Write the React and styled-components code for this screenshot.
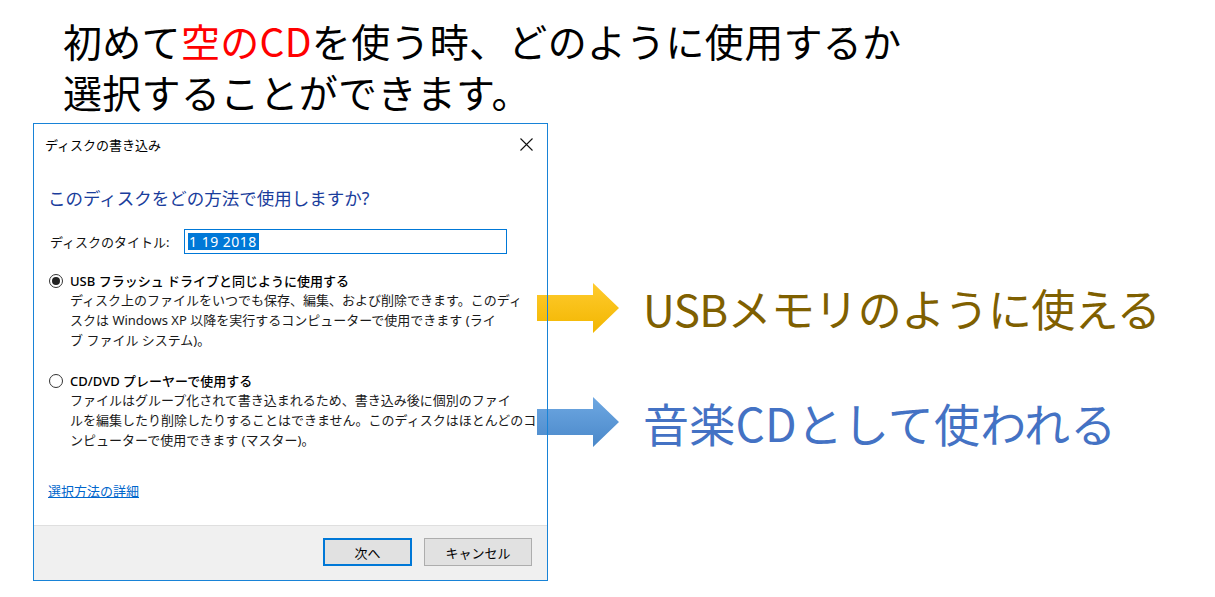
import React from 'react';
import styled, { createGlobalStyle } from 'styled-components';

const App = () => (
  <React.Fragment>
    <GlobalStyle />
    <Page>
      <Lead>
        初めて<Red>空のCD</Red>を使う時、どのように使用するか
        <br />
        選択することができます。
      </Lead>

      <Row>
        <Dialog>
          <TitleBar>
            <span>ディスクの書き込み</span>
            <CloseIcon viewBox="0 0 13 13">
              <path d="M0.5 0.5 L12.5 12.5 M12.5 0.5 L0.5 12.5" />
            </CloseIcon>
          </TitleBar>

          <Body>
            <Instruction>このディスクをどの方法で使用しますか?</Instruction>

            <Field>
              <FieldLabel>ディスクのタイトル:</FieldLabel>
              <TitleInput>
                <Selected>1 19 2018</Selected>
              </TitleInput>
            </Field>

            <Option top={18}>
              <Radio checked />
              <OptionText>
                <OptionLabel>USB フラッシュ ドライブと同じように使用する</OptionLabel>
                <OptionDesc>
                  ディスク上のファイルをいつでも保存、編集、および削除できます。このディ
                  <br />
                  スクは Windows XP 以降を実行するコンピューターで使用できます (ライ
                  <br />
                  ブ ファイル システム)。
                </OptionDesc>
              </OptionText>
            </Option>

            <Option top={22}>
              <Radio />
              <OptionText>
                <OptionLabel>CD/DVD プレーヤーで使用する</OptionLabel>
                <OptionDesc>
                  ファイルはグループ化されて書き込まれるため、書き込み後に個別のファイ
                  <br />
                  ルを編集したり削除したりすることはできません。このディスクはほとんどのコ
                  <br />
                  ンピューターで使用できます (マスター)。
                </OptionDesc>
              </OptionText>
            </Option>

            <HelpLink>選択方法の詳細</HelpLink>
          </Body>

          <Footer>
            <Button primary width={89}>次へ</Button>
            <Button width={108}>キャンセル</Button>
          </Footer>
        </Dialog>

        <Callouts>
          <Callout>
            <Arrow from="#ffcb2e" to="#f2b600" id="gold" />
            <CalloutText color="#7f6000" size={44} spacing={-0.6}>
              USBメモリのように使える
            </CalloutText>
          </Callout>
          <Callout>
            <Arrow from="#6ea8e2" to="#4a88c9" id="blue" />
            <CalloutText color="#4472c4" size={46} spacing={0.2}>
              音楽CDとして使われる
            </CalloutText>
          </Callout>
        </Callouts>
      </Row>
    </Page>
  </React.Fragment>
);

const Arrow = ({ from, to, id }) => (
  <ArrowSvg viewBox="0 0 82 50">
    <defs>
      <linearGradient id={id} x1="0" y1="0" x2="0" y2="1">
        <stop offset="0" stopColor={from} />
        <stop offset="1" stopColor={to} />
      </linearGradient>
    </defs>
    <path d="M0 12 H56 V0 L82 25 L56 50 V38 H0 Z" fill={`url(#${id})`} />
  </ArrowSvg>
);

const GlobalStyle = createGlobalStyle`
  html, body, #root {
    margin: 0;
    width: 100%;
    background: #fff;
  }

  body {
    font-family: "Noto Sans CJK JP", "Noto Sans", sans-serif;
    color: #000;
  }
`;

const Page = styled.div`
  padding: 15px 0 0 33px;
`;

const Lead = styled.div`
  margin-left: 30px;
  font-size: 39px;
  line-height: 51px;
  letter-spacing: 0.3px;
  color: #000;
`;

const Red = styled.span`
  color: #ff0000;
`;

const Row = styled.div`
  display: flex;
  align-items: flex-start;
  margin-top: 6px;
`;

const Dialog = styled.div`
  position: relative;
  box-sizing: border-box;
  width: 515px;
  height: 458px;
  background: #fff;
  display: flex;
  flex-direction: column;
  font-family: "Noto Sans", "Noto Sans CJK JP", sans-serif;
  font-size: 13px;

  &::after {
    content: '';
    position: absolute;
    inset: 0;
    border: 1px solid #1883d7;
    z-index: 2;
    pointer-events: none;
  }
`;

const TitleBar = styled.div`
  height: 42px;
  display: flex;
  align-items: center;
  justify-content: space-between;
  padding: 0 15px 0 12px;
  font-size: 13px;
  color: #000;
`;

const CloseIcon = styled.svg`
  width: 13px;
  height: 13px;
  stroke: #111;
  stroke-width: 1.1;
  fill: none;
`;

const Body = styled.div`
  padding: 0 15px;
  display: flex;
  flex-direction: column;
  align-items: flex-start;
`;

const Instruction = styled.div`
  margin-top: 21px;
  font-size: 17.5px;
  line-height: 24px;
  color: #1a3d9c;
`;

const Field = styled.div`
  margin-top: 19px;
  display: flex;
  align-items: center;
  padding-left: 2px;
`;

const FieldLabel = styled.div`
  width: 134px;
  font-size: 13px;
  color: #111;
`;

const TitleInput = styled.div`
  box-sizing: border-box;
  width: 323px;
  height: 25px;
  border: 1px solid #0078d7;
  padding: 3px 3px;
  display: flex;
  align-items: center;
`;

const Selected = styled.span`
  background: #0078d7;
  color: #fff;
  font-size: 14px;
  letter-spacing: 0.5px;
  line-height: 17px;
  padding: 0 2px 0 1px;
`;

const Option = styled.div`
  margin-top: ${p => p.top}px;
  display: flex;
  align-items: flex-start;
  gap: 7px;
`;

const Radio = styled.span`
  box-sizing: border-box;
  margin: 2px 0 0 1px;
  width: 14px;
  height: 14px;
  border-radius: 50%;
  border: 1px solid #333;
  display: flex;
  align-items: center;
  justify-content: center;

  &::before {
    content: '';
    width: 8px;
    height: 8px;
    border-radius: 50%;
    background: ${p => (p.checked ? '#222' : 'transparent')};
  }
`;

const OptionText = styled.div`
  display: flex;
  flex-direction: column;
`;

const OptionLabel = styled.div`
  font-size: 13px;
  line-height: 18px;
  font-weight: 500;
  color: #000;
`;

const OptionDesc = styled.div`
  font-size: 13px;
  line-height: 20px;
  color: #1a1a1a;
  white-space: nowrap;
`;

const HelpLink = styled.a`
  margin-top: 31px;
  font-size: 13px;
  line-height: 20px;
  color: #0066cc;
  text-decoration: underline;
  cursor: pointer;
`;

const Footer = styled.div`
  margin-top: auto;
  height: 56px;
  box-sizing: border-box;
  border-top: 1px solid #dfdfdf;
  background: #f0f0f0;
  display: flex;
  justify-content: flex-end;
  align-items: flex-start;
  gap: 12px;
  padding: 12px 16px 0 0;
`;

const Button = styled.button`
  box-sizing: border-box;
  width: ${p => p.width}px;
  height: 28px;
  background: #e1e1e1;
  border: ${p => (p.primary ? '2px solid #0078d7' : '1px solid #adadad')};
  font-family: inherit;
  font-size: 13px;
  color: #000;
  padding: 0;
`;

const Callouts = styled.div`
  position: relative;
  z-index: 1;
  margin-left: -11px;
  padding-top: 160px;
  display: flex;
  flex-direction: column;
  gap: 64px;
`;

const Callout = styled.div`
  display: flex;
  align-items: center;
  gap: 24px;
`;

const ArrowSvg = styled.svg`
  width: 82px;
  height: 50px;
  flex: none;
`;

const CalloutText = styled.div`
  font-size: ${p => p.size}px;
  letter-spacing: ${p => p.spacing}px;
  color: ${p => p.color};
  line-height: 50px;
  white-space: nowrap;
`;

export default App;
